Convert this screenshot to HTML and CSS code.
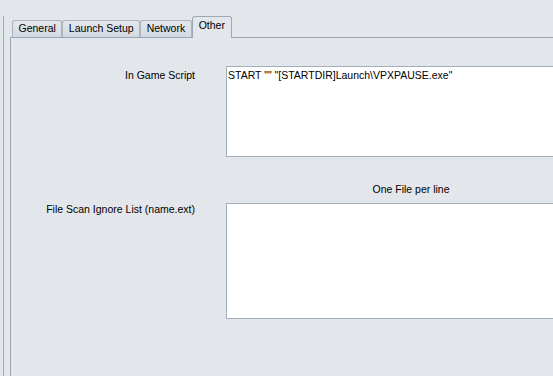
FILE: index.html
```html
<!DOCTYPE html>
<html>
<head>
<meta charset="utf-8">
<link rel="stylesheet" href="styles.css">
</head>
<body>
<div class="window">
  <div class="frame">
    <div class="tabs">
      <div class="tab">General</div>
      <div class="tab">Launch Setup</div>
      <div class="tab">Network</div>
      <div class="tab active">Other</div>
    </div>
    <div class="panel">
      <div class="form">
        <div class="label label-first">In Game Script</div>
        <div class="textarea ta-script">START "" "[STARTDIR]Launch\VPXPAUSE.exe"</div>
        <div class="spacer"></div>
        <div class="hint">One File per line</div>
        <div class="label">File Scan Ignore List (name.ext)</div>
        <div class="textarea ta-ignore"></div>
      </div>
    </div>
  </div>
</div>
</body>
</html>
```
FILE: styles.css
```css
html, body {
  margin: 0;
  height: 100%;
  overflow: hidden;
}
body {
  background: #e3e6ea;
  font-family: "Liberation Sans", Arial, sans-serif;
  font-size: 10.5px;
  color: #000;
}
.window {
  box-sizing: border-box;
  height: 100%;
  padding: 16px 0 0 3px;
}
.frame {
  box-sizing: border-box;
  height: 100%;
  border-left: 1px solid #a2acba;
  padding-left: 6px;
  display: flex;
  flex-direction: column;
}
.tabs {
  display: flex;
  align-items: flex-end;
  gap: 0;
  height: 21px;
  padding-left: 2px;
}
.tab {
  box-sizing: border-box;
  height: 17px;
  padding: 0 5.5px;
  line-height: 15px;
  border: 1px solid #aab3c0;
  border-bottom: none;
  border-radius: 3px 3px 0 0;
  background: linear-gradient(#e4e8ed, #d3d9e1);
  white-space: nowrap;
}
.tab.active {
  height: 22px;
  margin-bottom: -1px;
  padding: 0 6px;
  line-height: 17px;
  background: #e3e6ea;
  border-color: #9ea8b6;
  position: relative;
  z-index: 1;
}
.panel {
  flex: 1;
  border-top: 1px solid #98a3b3;
  border-left: 1px solid #98a3b3;
}
.form {
  display: grid;
  grid-template-columns: 184px 370px;
  column-gap: 31px;
  padding-top: 28px;
}
.label {
  text-align: right;
  line-height: 13px;
  white-space: nowrap;
}
.label-first {
  padding-top: 3px;
}
.textarea {
  box-sizing: border-box;
  background: #fff;
  border: 1px solid #a3adbb;
  padding: 2px 1px;
  line-height: 13px;
  white-space: pre;
}
.ta-script {
  height: 91px;
}
.ta-ignore {
  height: 116px;
}
.hint {
  text-align: center;
  line-height: 13px;
  margin: 26px 0 7px;
}
```
